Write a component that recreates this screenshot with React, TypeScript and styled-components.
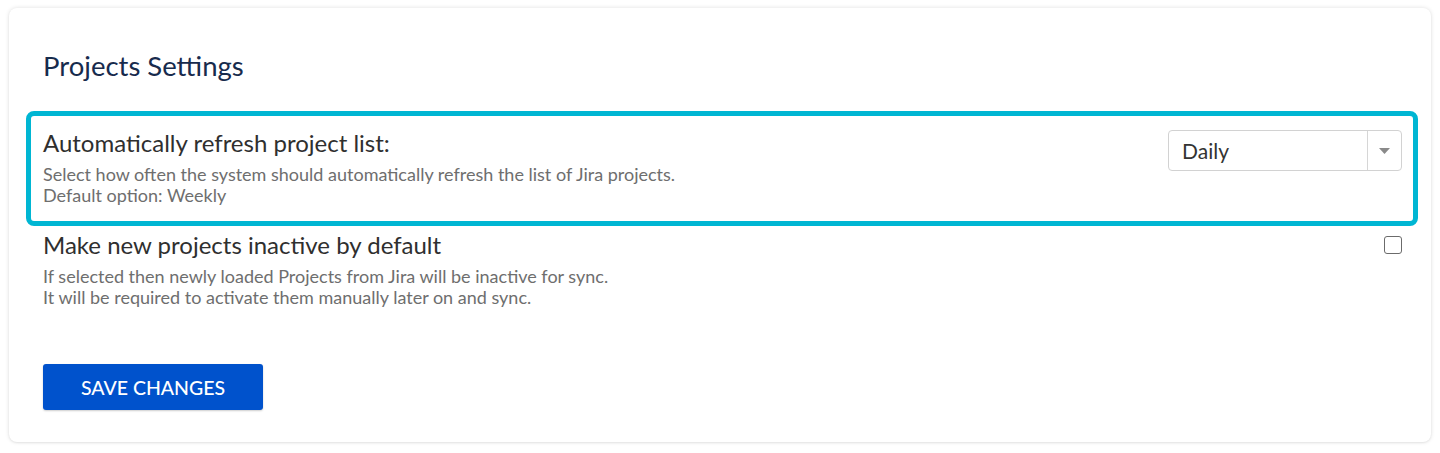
import React from "react";
import styled, { createGlobalStyle } from "styled-components";

const Global = createGlobalStyle`
  html, body { margin: 0; padding: 0; background: #ffffff; }
  body { font-family: Lato, "Open Sans", sans-serif; }
`;

const Card = styled.div`
  margin: 8px 9px 11px 9px;
  height: 434px;
  box-sizing: border-box;
  background: #ffffff;
  border-radius: 8px;
  box-shadow: 0 0 4px rgba(0, 0, 0, 0.13), 0 1px 2px rgba(0, 0, 0, 0.05);
  padding: 43px 29px 32px 34px;
  display: flex;
  flex-direction: column;
`;

const Heading = styled.h2`
  margin: 0 0 30px 0;
  font-size: 27.5px;
  line-height: 30px;
  font-weight: 400;
  color: #172b4d;
`;

const Row = styled.div<{ $highlight?: boolean }>`
  display: flex;
  justify-content: space-between;
  align-items: flex-start;
  ${(p) =>
    p.$highlight
      ? `
    margin: 0 -16px 0 -17px;
    border: 5px solid #00b6d3;
    border-radius: 8px;
    padding: 12px 11px 15px 12px;
  `
      : `
    margin-top: 4px;
  `}
`;

const Texts = styled.div`
  display: flex;
  flex-direction: column;
`;

const Title = styled.div`
  font-size: 24px;
  line-height: 30px;
  color: #2f2f2f;
`;

const Desc = styled.div`
  margin-top: 6px;
  font-size: 18px;
  line-height: 21px;
  color: #6e6e6e;
`;

const Select = styled.div`
  margin-top: 2px;
  width: 234px;
  height: 41px;
  box-sizing: border-box;
  border: 1px solid #d2d2d2;
  border-radius: 4px;
  display: flex;
  align-items: stretch;
  background: #fff;
`;

const SelectValue = styled.div`
  flex: 1;
  display: flex;
  align-items: center;
  padding-left: 13px;
  font-size: 21px;
  color: #333;
`;

const SelectArrow = styled.div`
  width: 33px;
  border-left: 1px solid #d6d6d6;
  display: flex;
  align-items: center;
  justify-content: center;
`;

const Checkbox = styled.div`
  margin-top: 6px;
  width: 18px;
  height: 18px;
  box-sizing: border-box;
  border: 1.5px solid #6b6b6b;
  border-radius: 3px;
  background: #fff;
`;

const Button = styled.button`
  margin-top: 56px;
  width: 220px;
  height: 46px;
  border: none;
  border-radius: 3px;
  background: #0052cc;
  color: #ffffff;
  font-family: Lato, "Open Sans", sans-serif;
  font-size: 19.5px;
  font-weight: 500;
  box-shadow: 0 1px 2px rgba(0, 0, 0, 0.2);
  align-self: flex-start;
  cursor: pointer;
`;

export default function App() {
  return (
    <>
      <Global />
      <Card>
        <Heading>Projects Settings</Heading>
        <Row $highlight>
          <Texts>
            <Title>Automatically refresh project list:</Title>
            <Desc>
              Select how often the system should automatically refresh the list of Jira projects.
              <br />
              Default option: Weekly
            </Desc>
          </Texts>
          <Select>
            <SelectValue>Daily</SelectValue>
            <SelectArrow>
              <svg width="11" height="6" viewBox="0 0 11 6">
                <path d="M0 0 L11 0 L5.5 6 Z" fill="#8a8a8a" />
              </svg>
            </SelectArrow>
          </Select>
        </Row>
        <Row>
          <Texts>
            <Title>Make new projects inactive by default</Title>
            <Desc>
              If selected then newly loaded Projects from Jira will be inactive for sync.
              <br />
              It will be required to activate them manually later on and sync.
            </Desc>
          </Texts>
          <Checkbox />
        </Row>
        <Button>SAVE CHANGES</Button>
      </Card>
    </>
  );
}
